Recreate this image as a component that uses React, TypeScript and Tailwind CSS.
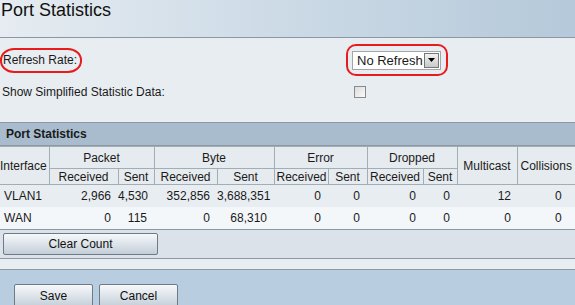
import React from 'react';

interface PortRow {
  name: string;
  values: string[];
  multicast: string;
  collisions: string;
}

const rows: PortRow[] = [
  { name: 'VLAN1', values: ['2,966', '4,530', '352,856', '3,688,351', '0', '0', '0', '0'], multicast: '12', collisions: '0' },
  { name: 'WAN', values: ['0', '115', '0', '68,310', '0', '0', '0', '0'], multicast: '0', collisions: '0' },
];

const th = 'border border-[#a3adb6] bg-[#e6ebef] font-normal text-center px-[2px] py-0 leading-[14px]';
const btn =
  'border border-[#6e7a86] rounded-[2px] bg-gradient-to-b from-[#f7f9fb] to-[#c3ced8] text-[12px] text-[#111]';

const App: React.FC = () => {
  return (
    <div className="w-[575px] h-[305px] overflow-hidden bg-[#e8edf1] text-[12px] text-[#1a1a1a] font-['Liberation_Sans',Arial,sans-serif] flex flex-col">
      <div className="h-[38px] shrink-0 border-b border-[#8b98a4] bg-gradient-to-r from-[#e6ecf1] via-[#ccdae6] to-[#b5c9da]">
        <h1 className="text-[18px] leading-[20px] pl-[1px] text-[#111]">Port Statistics</h1>
      </div>

      <div className="flex items-center h-[38px] mt-[3px] shrink-0">
        <div className="w-[346px] shrink-0">
          <span className="inline-block border-2 border-[#e81c1c] rounded-[14px/12px] pl-[1px] h-[25px] w-[82px] leading-[21px]">Refresh Rate:</span>
        </div>
        <div className="border-2 border-[#e81c1c] rounded-[10px] h-[32px] w-[102px] flex items-center pl-[4px]">
          <div className="flex items-center bg-white border border-[#a5a5a5] h-[19px] w-[89px]">
            <span className="flex-1 pl-[4px] text-[13px] leading-[17px]">No Refresh</span>
            <span className="w-[15px] h-[15px] mr-[1px] bg-gradient-to-b from-[#f2f2f2] to-[#c9c9c9] border border-[#777] flex items-center justify-center">
              <svg width="7" height="4" viewBox="0 0 7 4"><path d="M0 0h7L3.5 4z" fill="#000" /></svg>
            </span>
          </div>
        </div>
      </div>

      <div className="flex items-center h-[22px] mt-[2px] shrink-0">
        <span className="w-[354px] pl-[2px] shrink-0">Show Simplified Statistic Data:</span>
        <span className="w-[12px] h-[12px] border border-[#8a8a8a] bg-gradient-to-br from-[#dcdcdc] to-[#fafafa]" />
      </div>

      <div className="mt-[19px] border-t border-[#8c99a5] shrink-0">
        <div className="h-[23px] bg-[#a8bccd] font-bold pl-[6px] leading-[23px] border-b border-[#8c99a5]">Port Statistics</div>
        <table className="table-fixed border-collapse w-[600px] text-[12px]">
          <colgroup>
            <col className="w-[49px]" />
            <col className="w-[69px]" />
            <col className="w-[36px]" />
            <col className="w-[63px]" />
            <col className="w-[57px]" />
            <col className="w-[54px]" />
            <col className="w-[39px]" />
            <col className="w-[56px]" />
            <col className="w-[34px]" />
            <col className="w-[60px]" />
            <col className="w-[83px]" />
          </colgroup>
          <thead>
            <tr className="h-[22px]">
              <th rowSpan={2} className={`${th} text-left !px-0 border-l-0`}>Interface</th>
              <th colSpan={2} className={th}>Packet</th>
              <th colSpan={2} className={th}>Byte</th>
              <th colSpan={2} className={th}>Error</th>
              <th colSpan={2} className={th}>Dropped</th>
              <th rowSpan={2} className={th}>Multicast</th>
              <th rowSpan={2} className={`${th} text-left pl-[3px]`}>Collisions</th>
            </tr>
            <tr className="h-[16px]">
              {['Received', 'Sent', 'Received', 'Sent', 'Received', 'Sent', 'Received', 'Sent'].map((label, i) => (
                <th key={i} className={th}>{label}</th>
              ))}
            </tr>
          </thead>
          <tbody>
            {rows.map((row, idx) => (
              <tr key={row.name} className={`h-[22px] ${idx === 0 ? 'bg-[#e8edf1]' : 'bg-[#f4f7fa]'}`}>
                <td className="pl-[4px]">{row.name}</td>
                {row.values.map((v, i) => (
                  <td key={i} className="text-right pr-[7px]">{v}</td>
                ))}
                <td className="text-right pr-[6px]">{row.multicast}</td>
                <td className="text-left pl-[38px]">{row.collisions}</td>
              </tr>
            ))}
          </tbody>
        </table>
        <div className="h-[30px] bg-[#dbe2e9] border-t border-b border-[#8c99a5] flex items-center pl-[3px]">
          <button className={`${btn} w-[155px] h-[22px]`}>Clear Count</button>
        </div>
      </div>

      <div className="h-[11px] shrink-0 border-b border-[#8c99a5]" />
      <div className="flex-1 bg-[#b9cde0] flex items-start gap-[6px] pl-[14px] pt-[14px]">
        <button className={`${btn} w-[79px] h-[24px]`}>Save</button>
        <button className={`${btn} w-[79px] h-[24px]`}>Cancel</button>
      </div>
    </div>
  );
};

export default App;
